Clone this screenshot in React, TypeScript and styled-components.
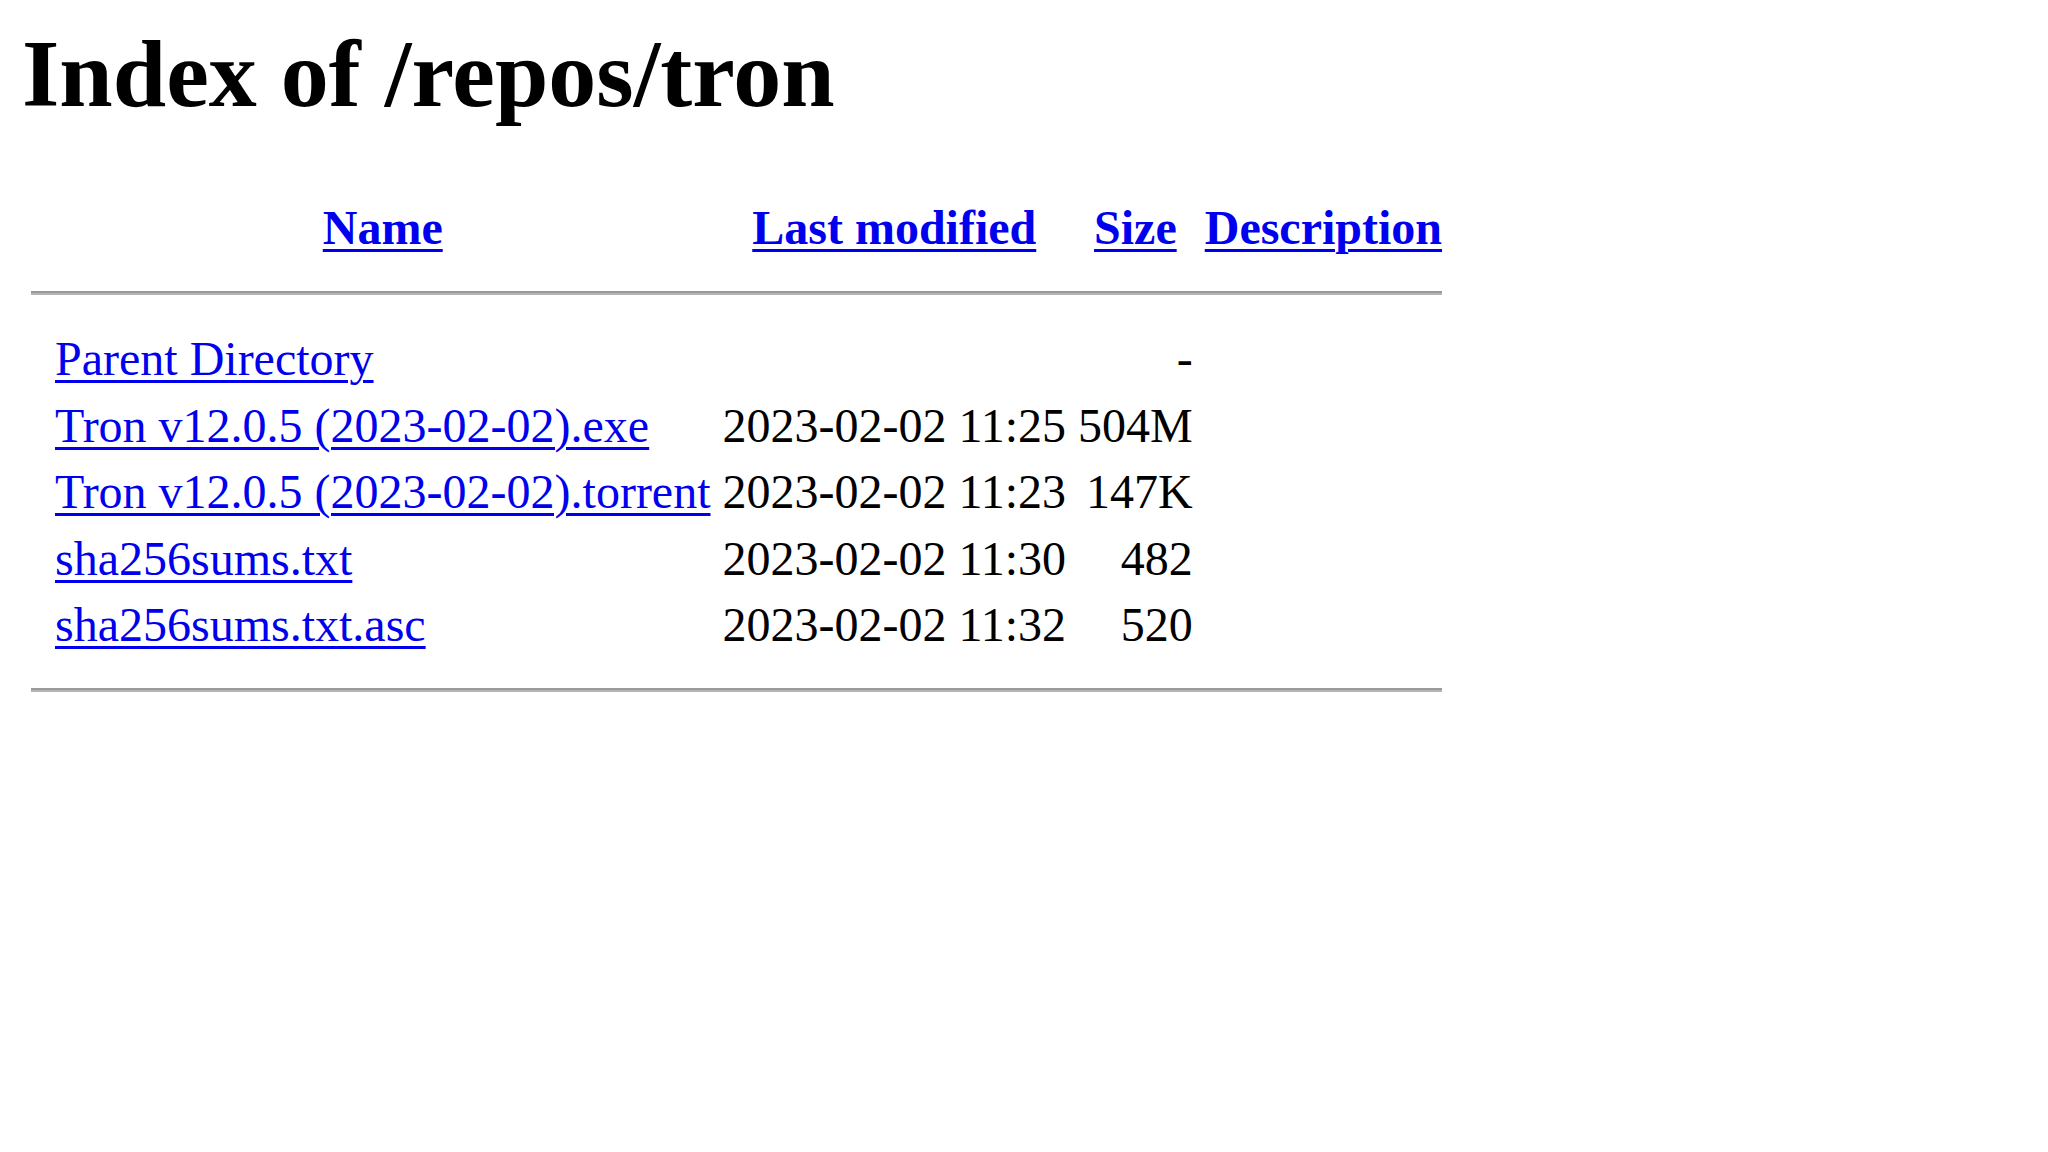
import React from "react";
import styled, { createGlobalStyle } from "styled-components";

const GlobalStyle = createGlobalStyle`
  html, body {
    margin: 0;
    padding: 0;
    background: #ffffff;
  }
  body {
    font-family: "Liberation Serif", "Times New Roman", serif;
    color: #000000;
  }
`;

const Page = styled.main`
  padding: 0 22px;
`;

const Title = styled.h1`
  margin: 19px 0 63px;
  font-size: 96px;
  line-height: 110px;
  font-weight: 700;
`;

const Listing = styled.table`
  border-collapse: separate;
  border-spacing: 6px;
  margin-left: 0;
  font-size: 48px;
  line-height: 54.4px;
`;

const HeadCell = styled.th`
  padding: 3px;
  font-weight: 700;
  text-align: center;
  vertical-align: top;
`;

const RuleCell = styled.th`
  padding: 3px;
`;

const IconCell = styled.td`
  padding: 3px;
  width: 12px;
  min-width: 12px;
`;

const Cell = styled.td<{ $align?: "left" | "right" }>`
  padding: 3px;
  text-align: ${(p) => p.$align ?? "left"};
  white-space: nowrap;
  vertical-align: top;
`;

const Link = styled.a`
  color: #0000ee;
  text-decoration: underline;
  text-decoration-thickness: 3px;
  text-underline-offset: 5px;
`;

const Rule = styled.hr`
  margin: 24px 0 25px;
  height: 0;
  border: none;
  border-top: 2px solid #9a9a9a;
  border-bottom: 2px solid #b4b4b4;
`;

type Entry = { name: string; date: string; size: string };

const entries: Entry[] = [
  { name: "Tron v12.0.5 (2023-02-02).exe", date: "2023-02-02 11:25", size: "504M" },
  { name: "Tron v12.0.5 (2023-02-02).torrent", date: "2023-02-02 11:23", size: "147K" },
  { name: "sha256sums.txt", date: "2023-02-02 11:30", size: "482" },
  { name: "sha256sums.txt.asc", date: "2023-02-02 11:32", size: "520" },
];

export default function App() {
  return (
    <>
      <GlobalStyle />
      <Page>
        <Title>Index of /repos/tron</Title>
        <Listing>
          <tbody>
            <tr>
              <HeadCell />
              <HeadCell>
                <Link href="#">Name</Link>
              </HeadCell>
              <HeadCell>
                <Link href="#">Last modified</Link>
              </HeadCell>
              <HeadCell>
                <Link href="#">Size</Link>
              </HeadCell>
              <HeadCell>
                <Link href="#">Description</Link>
              </HeadCell>
            </tr>
            <tr>
              <RuleCell colSpan={5}>
                <Rule />
              </RuleCell>
            </tr>
            <tr>
              <IconCell />
              <Cell>
                <Link href="#">Parent Directory</Link>
              </Cell>
              <Cell>&nbsp;</Cell>
              <Cell $align="right">-</Cell>
              <Cell>&nbsp;</Cell>
            </tr>
            {entries.map((e) => (
              <tr key={e.name}>
                <IconCell />
                <Cell>
                  <Link href="#">{e.name}</Link>
                </Cell>
                <Cell $align="right">{e.date}</Cell>
                <Cell $align="right">{e.size}</Cell>
                <Cell>&nbsp;</Cell>
              </tr>
            ))}
            <tr>
              <RuleCell colSpan={5}>
                <Rule />
              </RuleCell>
            </tr>
          </tbody>
        </Listing>
      </Page>
    </>
  );
}
